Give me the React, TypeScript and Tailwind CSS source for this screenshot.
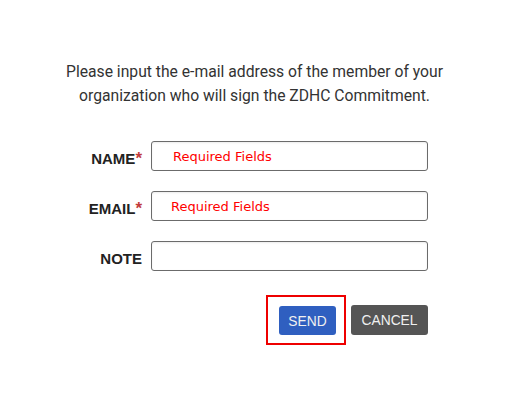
const fields = [
  { label: "NAME", required: true, pad: "pl-[21px]" },
  { label: "EMAIL", required: true, pad: "pl-[19px]" },
  { label: "NOTE", required: false, pad: "pl-[19px]" },
];

export default function App() {
  return (
    <div className="w-[529px] h-[398px] bg-white overflow-hidden">
      {/* Intro text */}
      <p className="w-[509px] pt-[60px] text-center font-['Roboto',sans-serif] text-[15.7px] leading-[24px] text-[#333]">
        Please input the e-mail address of the member of your
        <br />
        organization who will sign the ZDHC Commitment.
      </p>

      {/* Form rows */}
      <div className="mt-[33px] flex flex-col gap-[20px]">
        {fields.map((f) => (
          <div key={f.label} className="flex items-center">
            <label className="mt-[6px] flex w-[142px] items-start justify-end font-['Liberation_Sans',Arial,sans-serif] text-[15px] font-bold leading-[18px] text-[#222]">
              {f.label}
              {f.required && (
                <span className="text-[17px] font-bold leading-[18px] text-[#c23b3b]">*</span>
              )}
            </label>
            <input
              type="text"
              placeholder={f.required ? "Required Fields" : ""}
              className={`ml-[9px] h-[30px] w-[277px] rounded-[3px] border border-[#6b6b6b] bg-white ${f.pad} font-['DejaVu_Sans',sans-serif] text-[13px] text-[#333] shadow-[inset_0_1px_2px_rgba(0,0,0,0.08)] outline-none placeholder:text-[#ff0000]`}
            />
          </div>
        ))}
      </div>

      {/* Buttons */}
      <div className="mt-[24px] flex w-[428px] items-center justify-end gap-[5px]">
        <div className="border-2 border-[#ee0000] pl-[11px] pr-2 pt-[9px] pb-2">
          <button className="h-[29px] w-[57px] rounded-[3px] bg-[#2f5fc0] pt-[3px] font-['Liberation_Sans',Arial,sans-serif] text-[13.8px] text-[#f0f0f0]">
            SEND
          </button>
        </div>
        <button className="h-[30px] w-[77px] rounded-[3px] bg-[#555] pt-[3px] font-['Liberation_Sans',Arial,sans-serif] text-[13.8px] text-[#f0f0f0]">
          CANCEL
        </button>
      </div>
    </div>
  );
}
